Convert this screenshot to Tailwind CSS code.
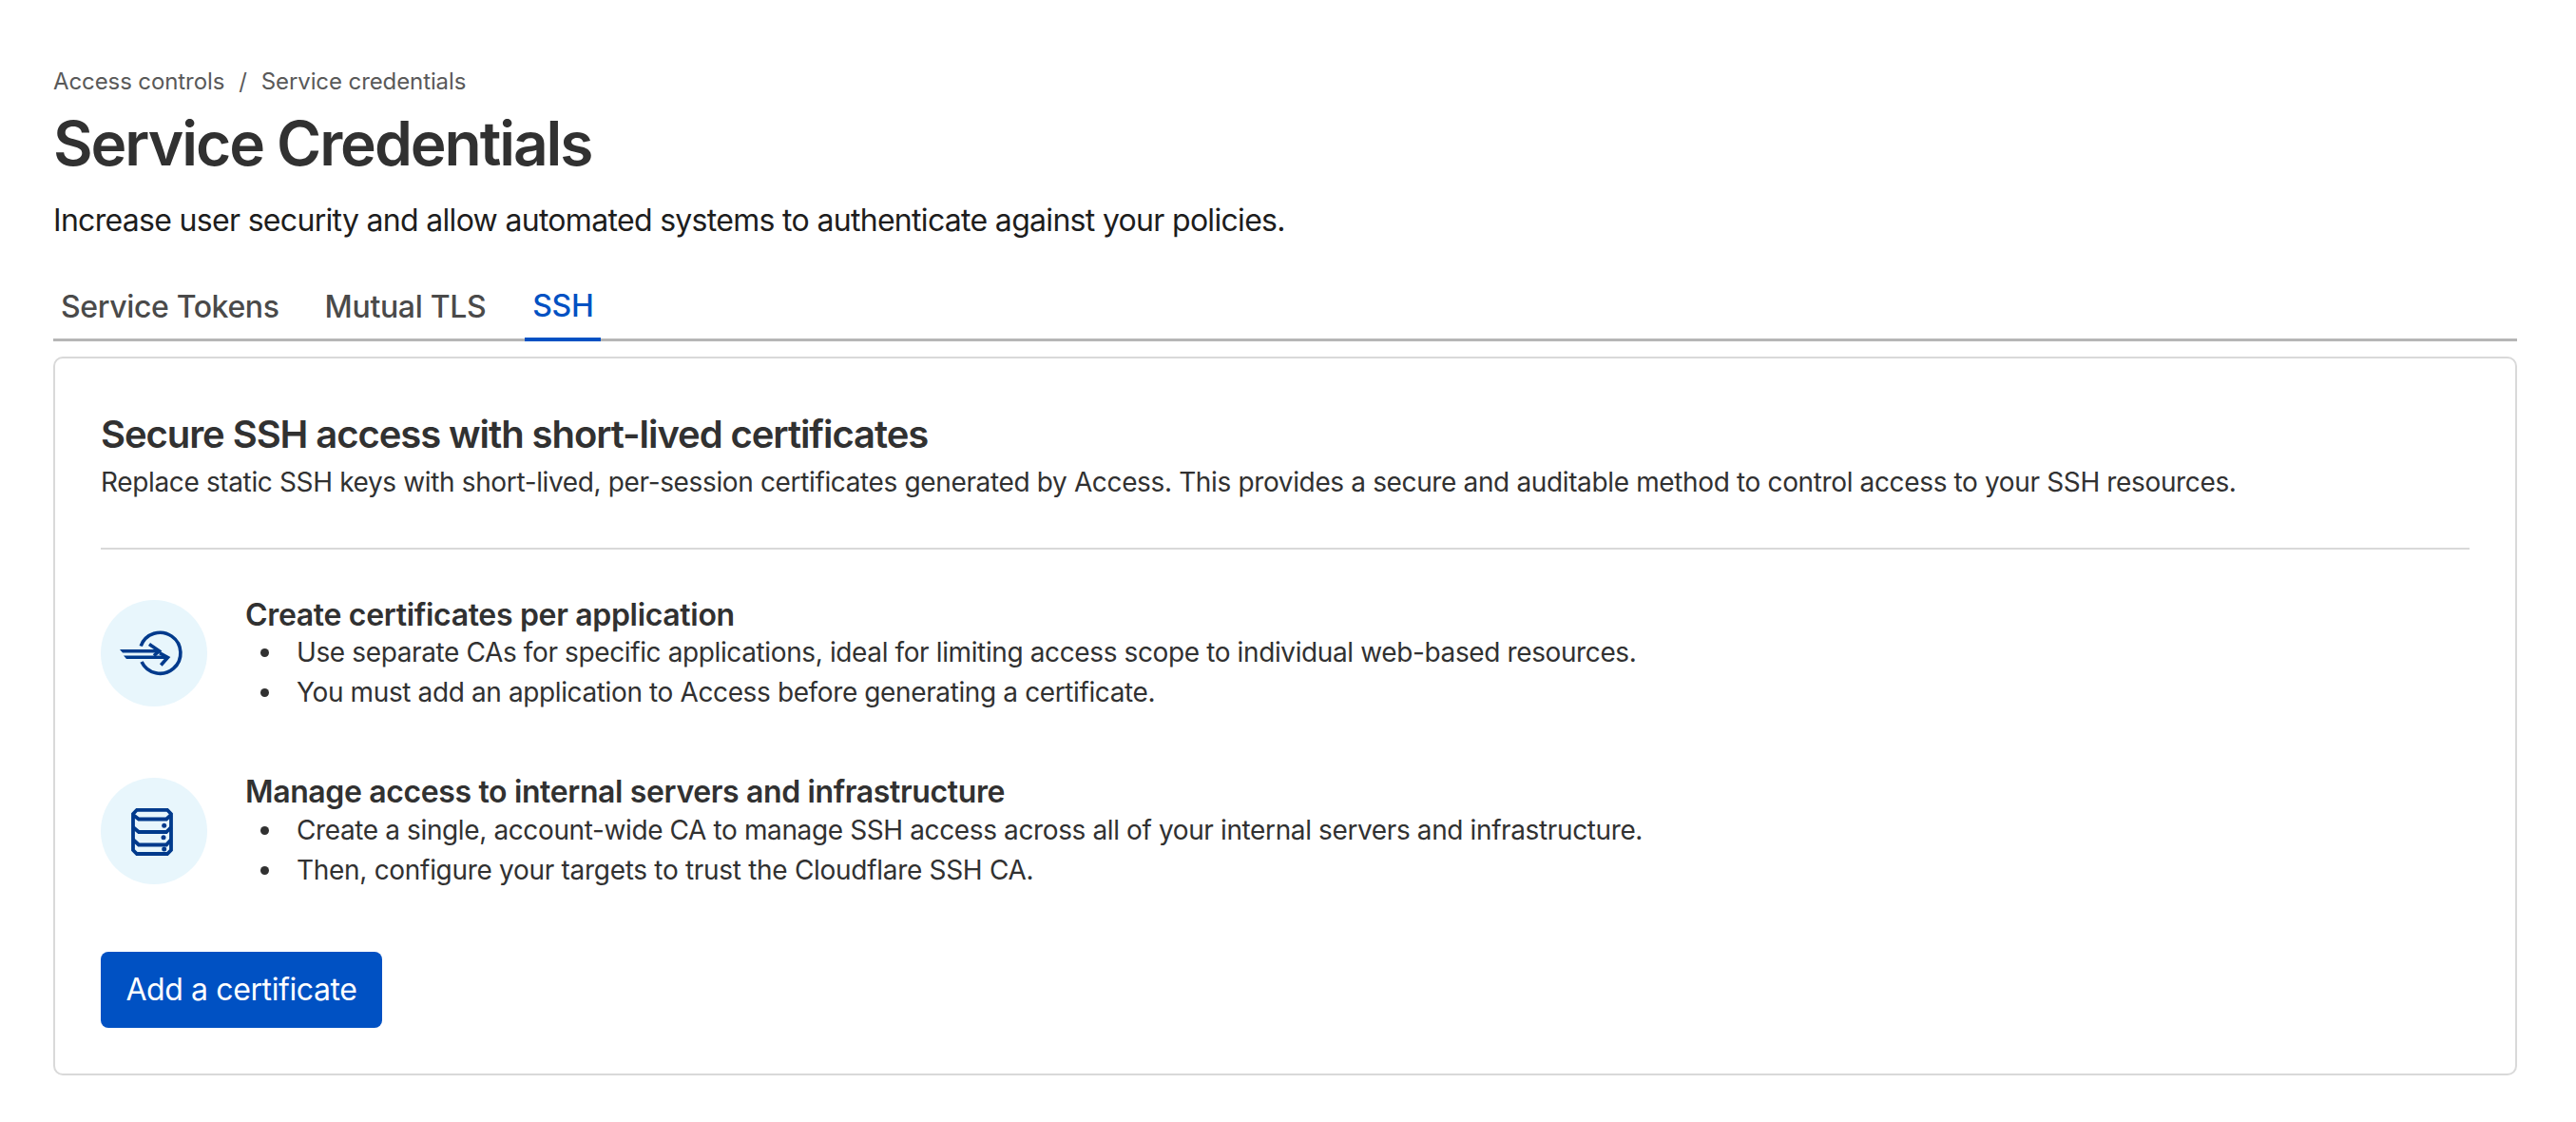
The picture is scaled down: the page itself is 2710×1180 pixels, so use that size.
<!DOCTYPE html>
<html lang="en">
<head>
    <meta charset="UTF-8">
    <title>Service Credentials</title>
    <script src="https://cdn.jsdelivr.net/npm/@tailwindcss/browser@4"></script>
</head>
<body class="bg-white font-['Inter',sans-serif] text-[#313131]">
    <main class="pl-[56px] pr-[62px] pt-[70px]">
        <nav class="flex items-center text-[24px] leading-[32px] text-[#595959] tracking-[-0.1px]">
            <a>Access controls</a>
            <span class="mx-[15px]">/</span>
            <a>Service credentials</a>
        </nav>
        <h1 class="mt-[9px] text-[64px] leading-[80px] font-semibold tracking-[-2.05px]">Service Credentials</h1>
        <p class="mt-[21px] text-[32px] leading-[40px] text-[#1d1d1d] tracking-[-0.69px]">Increase user security and allow automated systems to authenticate against your policies.</p>

        <div class="mt-[45px] flex border-b-[3px] border-[#b6b6b6] h-[62px]">
            <a class="px-[8px] mr-[32px] pt-[6px] text-[32px] leading-[40px] font-medium text-[#4a4a4a] tracking-[-0.37px]">Service Tokens</a>
            <a class="px-[8px] mr-[33px] pt-[6px] text-[32px] leading-[40px] font-medium text-[#4a4a4a] tracking-[-0.33px]">Mutual TLS</a>
            <a class="px-[8px] h-[62px] pt-[5px] border-b-4 border-[#0051c3] text-[32px] leading-[40px] font-medium text-[#0051c3] tracking-[-0.37px]">SSH</a>
        </div>

        <section class="mt-[16px] h-[756px] border-2 border-[#d9d9d9] rounded-[10px] px-[48px] pt-[55px]">
            <h2 class="text-[40px] leading-[50px] font-semibold tracking-[-1.07px]">Secure SSH access with short-lived certificates</h2>
            <p class="mt-[5px] text-[28px] leading-[40px] tracking-[-0.36px]">Replace static SSH keys with short-lived, per-session certificates generated by Access. This provides a secure and auditable method to control access to your SSH resources.</p>
            <hr class="mt-[49px] border-t-2 border-[#d9d9d9]">

            <div class="mt-[53px] flex gap-[40px]">
                <div class="w-[112px] h-[112px] rounded-full bg-[#e8f6fc] flex items-center justify-center shrink-0">
                    <svg class="w-[90px] h-[72px]" viewBox="2 1 90 72" fill="none" stroke="#003a8c">
                        <path d="M33.2 29.5A21.5 21.5 0 1 1 34 46" stroke-width="3.6"/>
                        <path d="M42 27.5L52.5 34.6L47 39.5M54.3 49.5L61.5 41.5L53 36.7" stroke-width="3.6"/>
                        <path d="M11 33H52V36.4H14ZM15 39.6H61V43H18Z" fill="#003a8c" stroke="none"/>
                    </svg>
                </div>
                <div>
                    <h3 class="text-[32px] leading-[40px] font-semibold mt-[-4px] tracking-[-0.33px]">Create certificates per application</h3>
                    <ul class="mt-[-2px] pl-[16px] text-[28px] leading-[42px] tracking-[-0.38px]">
                        <li class="flex items-center"><span class="w-[9px] h-[9px] rounded-full bg-[#313131] mr-[29px] shrink-0"></span>Use separate CAs for specific applications, ideal for limiting access scope to individual web-based resources.</li>
                        <li class="flex items-center"><span class="w-[9px] h-[9px] rounded-full bg-[#313131] mr-[29px] shrink-0"></span>You must add an application to Access before generating a certificate.</li>
                    </ul>
                </div>
            </div>

            <div class="mt-[69px] flex gap-[40px]">
                <div class="w-[112px] h-[112px] rounded-full bg-[#e8f6fc] flex items-center justify-center shrink-0">
                    <svg class="w-[70px] h-[70px]" viewBox="2 0 70 70" fill="none" stroke="#003a8c" stroke-width="3.8">
                        <path d="M19 12.8H51L55 17V55L51 59H19L15 55V17Z"/>
                        <path d="M15 18L21 22.5H50L55 18M15 31L21 36H50L55 31M15 44L21 49.5H50L55 44"/>
                        <circle cx="47.7" cy="29.3" r="2.5" fill="#003a8c" stroke="none"/>
                        <circle cx="47" cy="41.7" r="2.5" fill="#003a8c" stroke="none"/>
                        <circle cx="47.7" cy="54" r="2.5" fill="#003a8c" stroke="none"/>
                    </svg>
                </div>
                <div>
                    <h3 class="text-[32px] leading-[40px] font-semibold mt-[-5px] tracking-[-0.37px]">Manage access to internal servers and infrastructure</h3>
                    <ul class="mt-[-1px] pl-[16px] text-[28px] leading-[42px] tracking-[-0.38px]">
                        <li class="flex items-center"><span class="w-[9px] h-[9px] rounded-full bg-[#313131] mr-[29px] shrink-0"></span>Create a single, account-wide CA to manage SSH access across all of your internal servers and infrastructure.</li>
                        <li class="flex items-center tracking-[-0.3px]"><span class="w-[9px] h-[9px] rounded-full bg-[#313131] mr-[29px] shrink-0"></span>Then, configure your targets to trust the Cloudflare SSH CA.</li>
                    </ul>
                </div>
            </div>

            <button class="mt-[65px] h-[80px] w-[296px] rounded-[8px] bg-[#0051c3] text-white text-[32px] tracking-[-0.4px]">Add a certificate</button>
        </section>
    </main>
</body>
</html>
